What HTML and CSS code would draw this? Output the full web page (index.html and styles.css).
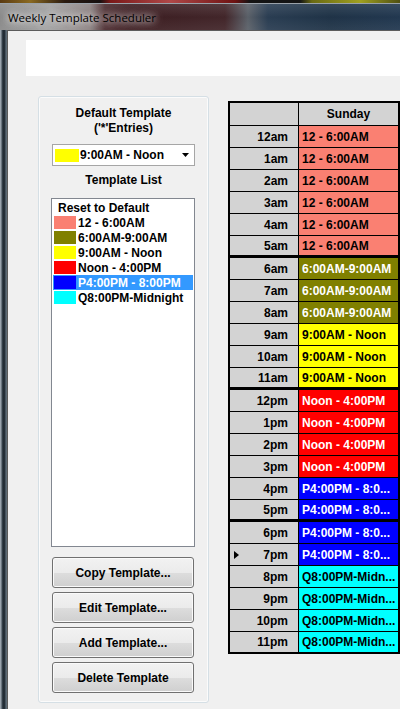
FILE: index.html
```html
<!DOCTYPE html>
<html>
<head>
<meta charset="utf-8">
<title>Weekly Template Scheduler</title>
<link rel="stylesheet" href="styles.css">
</head>
<body>
<div class="screen">
  <div class="desktop"></div>
  <div class="titlebar"><span class="title">Weekly Template Scheduler</span></div>
  <div class="window-body">
    <div class="frame-left"></div>
    <div class="client">
      <div class="whitebox"></div>
      <div class="content">
        <div class="group">
          <div class="label">Default Template<br>('*'Entries)</div>
          <div class="combo">
            <span class="combo-sw yellow"></span>
            <span class="combo-text">9:00AM - Noon</span>
            <svg class="arrow" width="7" height="4" viewBox="0 0 7 4"><path d="M0 0H7L3.5 4Z" fill="#000"/></svg>
          </div>
          <div class="label label-list">Template List</div>
          <div class="listbox">
            <div class="item item-reset">Reset to Default</div>
            <div class="item"><span class="sw salmon"></span>12 - 6:00AM</div>
            <div class="item"><span class="sw olive"></span>6:00AM-9:00AM</div>
            <div class="item"><span class="sw yellow"></span>9:00AM - Noon</div>
            <div class="item"><span class="sw red"></span>Noon - 4:00PM</div>
            <div class="item selected"><span class="sw blue"></span>P4:00PM - 8:00PM</div>
            <div class="item"><span class="sw cyan"></span>Q8:00PM-Midnight</div>
          </div>
          <div class="buttons">
            <button class="btn">Copy Template...</button>
            <button class="btn">Edit Template...</button>
            <button class="btn">Add Template...</button>
            <button class="btn">Delete Template</button>
          </div>
        </div>
        <div class="grid">
          <div class="grow head"><div class="rh"></div><div class="cell hcell">Sunday</div></div>
          <div class="grow"><div class="rh">12am</div><div class="cell salmon">12 - 6:00AM</div></div>
          <div class="grow"><div class="rh">1am</div><div class="cell salmon">12 - 6:00AM</div></div>
          <div class="grow"><div class="rh">2am</div><div class="cell salmon">12 - 6:00AM</div></div>
          <div class="grow"><div class="rh">3am</div><div class="cell salmon">12 - 6:00AM</div></div>
          <div class="grow"><div class="rh">4am</div><div class="cell salmon">12 - 6:00AM</div></div>
          <div class="grow sep"><div class="rh">5am</div><div class="cell salmon">12 - 6:00AM</div></div>
          <div class="grow"><div class="rh">6am</div><div class="cell olive light">6:00AM-9:00AM</div></div>
          <div class="grow"><div class="rh">7am</div><div class="cell olive light">6:00AM-9:00AM</div></div>
          <div class="grow"><div class="rh">8am</div><div class="cell olive light">6:00AM-9:00AM</div></div>
          <div class="grow"><div class="rh">9am</div><div class="cell yellow">9:00AM - Noon</div></div>
          <div class="grow"><div class="rh">10am</div><div class="cell yellow">9:00AM - Noon</div></div>
          <div class="grow sep"><div class="rh">11am</div><div class="cell yellow">9:00AM - Noon</div></div>
          <div class="grow"><div class="rh">12pm</div><div class="cell red light">Noon - 4:00PM</div></div>
          <div class="grow"><div class="rh">1pm</div><div class="cell red light">Noon - 4:00PM</div></div>
          <div class="grow"><div class="rh">2pm</div><div class="cell red light">Noon - 4:00PM</div></div>
          <div class="grow"><div class="rh">3pm</div><div class="cell red light">Noon - 4:00PM</div></div>
          <div class="grow"><div class="rh">4pm</div><div class="cell blue light">P4:00PM - 8:0...</div></div>
          <div class="grow sep"><div class="rh">5pm</div><div class="cell blue light">P4:00PM - 8:0...</div></div>
          <div class="grow"><div class="rh">6pm</div><div class="cell blue light">P4:00PM - 8:0...</div></div>
          <div class="grow"><div class="rh"><svg class="marker" width="5" height="8" viewBox="0 0 5 8"><path d="M0 0L5 4L0 8Z" fill="#000"/></svg>7pm</div><div class="cell blue light">P4:00PM - 8:0...</div></div>
          <div class="grow"><div class="rh">8pm</div><div class="cell cyan">Q8:00PM-Midn...</div></div>
          <div class="grow"><div class="rh">9pm</div><div class="cell cyan">Q8:00PM-Midn...</div></div>
          <div class="grow"><div class="rh">10pm</div><div class="cell cyan">Q8:00PM-Midn...</div></div>
          <div class="grow last"><div class="rh">11pm</div><div class="cell cyan">Q8:00PM-Midn...</div></div>
        </div>
      </div>
    </div>
  </div>
</div>
</body>
</html>
```

FILE: styles.css
```css
html, body {
  margin: 0;
  padding: 0;
  background: #000;
}

.screen {
  width: 400px;
  height: 709px;
  overflow: hidden;
  font-family: "Liberation Sans", Arial, sans-serif;
  font-size: 12px;
  color: #000;
}

.desktop {
  height: 3px;
  background: linear-gradient(to right, #5a3a12 0, #8a6a22 30px, #2a1a10 65px, #161010 100px, #7a1818 110px, #b04848 170px, #6e1212 235px, #141414 250px, #141414 300px, #6a6a12 312px, #a0a020 360px, #505012 400px);
}

.titlebar {
  height: 27px;
  box-sizing: border-box;
  border-top: 1px solid #9aa2aa;
  display: flex;
  align-items: center;
  padding-left: 8px;
  background:
    linear-gradient(to bottom, rgba(255,255,255,0.10), rgba(255,255,255,0) 50%, rgba(255,255,255,0.06)),
    linear-gradient(to right, #8a8a8a 0, #a2a2a2 50px, #8c8282 90px, #4a2a2e 105px, #3c1d21 130px, #42262a 225px, #5a6068 248px, #2a3d52 268px, #1f3347 330px, #223850 400px);
}

.title {
  font-family: "Open Sans", "Noto Sans", sans-serif;
  font-size: 11.5px;
  color: #000;
  text-shadow: 0 0 6px rgba(255,255,255,0.85), 0 0 10px rgba(255,255,255,0.7), 0 0 14px rgba(255,255,255,0.5);
}

.window-body {
  display: flex;
  height: 679px;
}

.frame-left {
  width: 7px;
  flex: none;
  background: linear-gradient(to right, #9aa4ad 0, #9aa4ad 1px, #3c4852 2px, #1b242c 4px, #2e3a44 5px, #5d6b76 6px, #5d6b76 7px);
}

.client {
  flex: none;
  width: 420px;
  background: #f0f0f0;
  border-left: 1px solid #5b5b5b;
  border-top: 1px solid #5b5b5b;
}

.whitebox {
  margin: 9px 0 0 18px;
  height: 36px;
  background: #fff;
}

.content {
  display: flex;
  align-items: flex-start;
  margin-top: 20px;
  padding-left: 30px;
}

.group {
  flex: none;
  width: 171px;
  height: 607px;
  box-sizing: border-box;
  border: 1px solid #d5dfe5;
  border-radius: 3px;
  box-shadow: inset 0 0 0 1px #fbfbfb;
  padding-top: 9px;
  display: flex;
  flex-direction: column;
}

.label {
  text-align: center;
  font-weight: bold;
  font-size: 12px;
  line-height: 15px;
}

.label-list {
  margin-top: 7px;
}

.combo {
  margin: 8px 0 0 13px;
  width: 143px;
  height: 22px;
  box-sizing: border-box;
  border: 1px solid #a6a6a6;
  background: #fff;
  display: flex;
  align-items: center;
}

.combo-sw {
  width: 24px;
  height: 13px;
  margin-left: 2px;
  flex: none;
}

.combo-text {
  margin-left: 1px;
  font-weight: bold;
  white-space: nowrap;
}

.arrow {
  margin-left: auto;
  margin-right: 5px;
  flex: none;
}

.listbox {
  margin: 10px 0 0 12px;
  width: 144px;
  height: 349px;
  box-sizing: border-box;
  border: 1px solid #828790;
  background: #fff;
  padding-top: 1px;
}

.item {
  display: flex;
  align-items: center;
  height: 15px;
  margin: 0 1px;
  font-weight: bold;
  font-size: 12px;
  white-space: nowrap;
}

.item-reset {
  padding-left: 5px;
}

.item .sw {
  width: 22px;
  height: 13px;
  margin: 0 2px 0 1px;
  flex: none;
}

.item.selected {
  background: #3399ff;
  color: #fff;
}

.buttons {
  margin: 10px 0 0 13px;
  display: flex;
  flex-direction: column;
  gap: 4px;
}

.btn {
  display: flex;
  align-items: center;
  justify-content: center;
  width: 142px;
  height: 31px;
  box-sizing: border-box;
  margin: 0;
  padding: 0;
  border: 1px solid #707070;
  border-radius: 3px;
  background: linear-gradient(to bottom, #f2f2f2 0%, #ebebeb 50%, #dddddd 51%, #cfcfcf 100%);
  box-shadow: inset 0 0 0 1px #fafafa;
  font-family: "Liberation Sans", Arial, sans-serif;
  font-weight: bold;
  font-size: 12px;
  color: #000;
}

.grid {
  flex: none;
  margin: 5px 0 0 19px;
  border-left: 2px solid #000;
  border-top: 2px solid #000;
}

.grow {
  display: flex;
  height: 22px;
  box-sizing: border-box;
  border-bottom: 1px solid #000;
}

.grow.head {
  height: 23px;
}

.grow.sep {
  border-bottom-width: 3px;
}

.grow.last {
  border-bottom-width: 2px;
}

.rh {
  width: 69px;
  flex: none;
  box-sizing: border-box;
  border-right: 1px solid #000;
  background: #d3d3d3;
  padding-right: 10px;
  display: flex;
  align-items: center;
  justify-content: flex-end;
  font-weight: bold;
  white-space: nowrap;
}

.marker {
  margin-left: 4px;
  margin-right: auto;
}

.cell {
  width: 101px;
  flex: none;
  box-sizing: border-box;
  border-right: 2px solid #000;
  padding-left: 3px;
  display: flex;
  align-items: center;
  font-weight: bold;
  white-space: nowrap;
  overflow: hidden;
}

.hcell {
  background: #d3d3d3;
  justify-content: center;
  padding-left: 0;
}

.light { color: #fff; }

.salmon { background: #fa8072; }
.olive { background: #808000; }
.yellow { background: #ffff00; }
.red { background: #ff0000; }
.blue { background: #0000ff; }
.cyan { background: #00ffff; }
```
